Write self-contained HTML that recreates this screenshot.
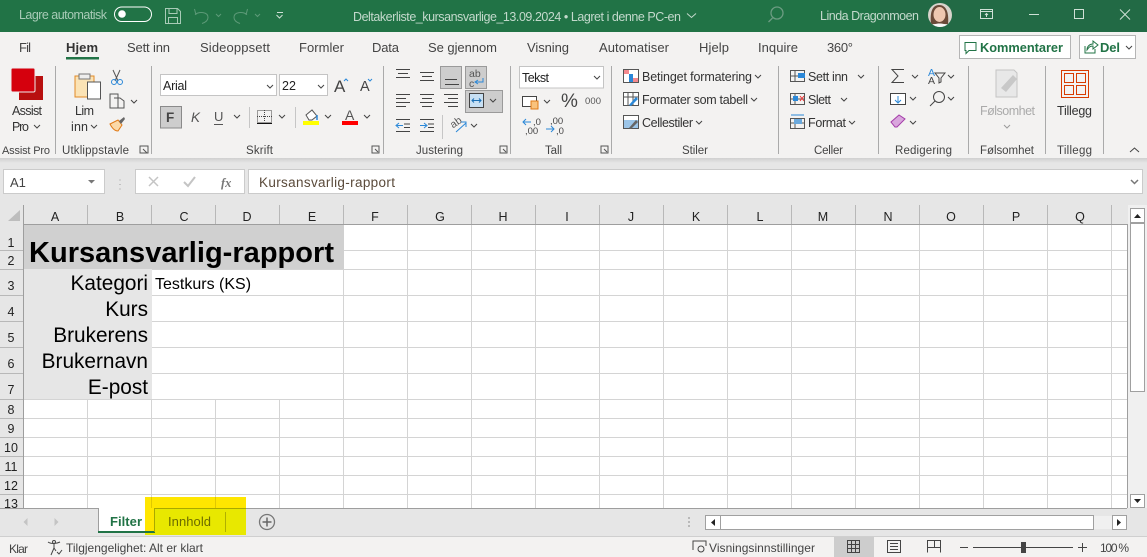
<!DOCTYPE html>
<html lang="no"><head><meta charset="utf-8"><title>Excel</title>
<style>
html,body{margin:0;padding:0;width:1147px;height:557px;overflow:hidden;background:#e6e6e6}
svg{display:block;font-family:"Liberation Sans",sans-serif}
text{fill:#333;font-size:12px}
.t{fill:#c3d9cc;font-size:12.5px}
.tab{font-size:13px;fill:#444}
.g{font-size:11.500px;fill:#444}
.r{font-size:12.500px;fill:#333}
.h{font-size:12.500px;fill:#222;text-anchor:middle}
.l{font-size:20.800px;fill:#000;text-anchor:end}
.s{font-size:12px;fill:#444}
.sep{stroke:#aaa;stroke-width:1}
.grid{stroke:#d4d4d4;stroke-width:1}
</style></head><body>
<svg width="1147" height="557" viewBox="0 0 1147 557" xmlns="http://www.w3.org/2000/svg">
<defs>
<path id="c" d="M0 0l3 3 3-3" fill="none" stroke="#444"/>
<linearGradient id="sh" x1="0" y1="0" x2="0" y2="1"><stop offset="0" stop-color="#cfcfcf"/><stop offset="1" stop-color="#e6e6e6"/></linearGradient>
<clipPath id="av"><circle cx="940" cy="15" r="12"/></clipPath>
</defs>
<rect width="1147" height="557" fill="#e6e6e6"/>
<!-- title bar -->
<rect width="1147" height="32" fill="#217346"/>
<rect x="880" width="267" height="32" fill="#236645" opacity=".7"/>
<text x="19" y="19" class="t" textLength="88" style="fill:#a8cbb7">Lagre automatisk</text>
<rect x="114.500" y="7" width="37" height="14.500" rx="7.200" fill="none" stroke="#fff"/>
<circle cx="122" cy="14" r="3.800" fill="#fff"/>
<g fill="none" stroke="#a8cbb7"><path d="M165.500 8.500h12l3 3v12h-15z"/><path d="M169 8.500v5h8v-5M168.500 23.500v-6h9v6"/>
<path d="M196 15l-1.500-6M195 14.500c4-3 13-3 13 3 0 3-3 5-6 6" stroke="#5d9a78"/>
<path d="M246 15l1.500-6M247 14.500c-4-3-13-3-13 3 0 3 3 5 6 6" stroke="#5d9a78"/>
<path d="M216 14l2.500 2.500 2.500-2.500M255 14l2.500 2.500 2.500-2.500" stroke="#5d9a78"/>
<path d="M277 12.500h6M276.500 15l3 3 3-3" stroke="#cfe0d6"/></g>
<text x="353" y="21" class="t" textLength="328">Deltakerliste_kursansvarlige_13.09.2024  •  Lagret i denne PC-en</text>
<path d="M687 13.500l4.500 4 4.500-4" fill="none" stroke="#c3d9cc"/>
<circle cx="777" cy="13" r="6" fill="none" stroke="#6c9c82" stroke-width="1.300"/><path d="M772.500 18l-4 4" stroke="#6c9c82" stroke-width="1.300"/>
<text x="820" y="20" class="t" textLength="99">Linda Dragonmoen</text>
<g clip-path="url(#av)"><rect x="928" y="3" width="24" height="24" fill="#d8d4cc"/>
<path d="M931 24c-1-9 0-19 8-19s10 9 9 19z" fill="#6b4a38"/>
<ellipse cx="939.500" cy="14.500" rx="6" ry="7.500" fill="#eec7b0"/>
<path d="M930 28c2-6 17-6 20 0z" fill="#f8f8f8"/></g>
<g fill="none" stroke="#cfe0d6"><rect x="980.500" y="9.500" width="12" height="9"/><path d="M980.500 11.500h12M986.500 17v-3M985 15l1.500-1.500 1.500 1.500"/><rect x="1074.500" y="9.500" width="9" height="9"/><path d="M1029 14.500h10M1120 9.500l10 10M1130 9.500l-10 10"/></g>
<!-- ribbon -->
<rect y="32" width="1147" height="126" fill="#f3f2f1"/>
<rect y="158" width="1147" height="5" fill="url(#sh)"/>
<text x="19" y="52" class="tab" textLength="12">Fil</text>
<text x="66" y="52" class="tab" style="font-weight:bold;fill:#333" textLength="32">Hjem</text>
<rect x="66" y="57" width="33" height="2.500" fill="#217346"/>
<text x="127" y="52" class="tab" textLength="43">Sett inn</text>
<text x="200" y="52" class="tab" textLength="70">Sideoppsett</text>
<text x="299" y="52" class="tab" textLength="45">Formler</text>
<text x="372" y="52" class="tab" textLength="27">Data</text>
<text x="428" y="52" class="tab" textLength="69">Se gjennom</text>
<text x="527" y="52" class="tab" textLength="42">Visning</text>
<text x="599" y="52" class="tab" textLength="70">Automatiser</text>
<text x="699" y="52" class="tab" textLength="30">Hjelp</text>
<text x="758" y="52" class="tab" textLength="40">Inquire</text>
<text x="827" y="52" class="tab" textLength="26">360°</text>
<rect x="959.500" y="35.500" width="111" height="23" fill="#fff" stroke="#b5b5b5"/>
<path d="M965 42.500h11v8h-7l-3 3v-3h-1z" fill="none" stroke="#217346"/>
<text x="980" y="52" style="font-weight:bold;font-size:12.800px;fill:#217346" textLength="83">Kommentarer</text>
<rect x="1079.500" y="35.500" width="56" height="23" fill="#fff" stroke="#b5b5b5"/>
<path d="M1085 46v7h10v-4M1087 50c0-4 3-6 6-6v-3l5 4-5 4v-3c-3 0-4 1-6 4z" fill="none" stroke="#217346"/>
<text x="1100" y="52" style="font-weight:bold;font-size:13px;fill:#217346" textLength="20">Del</text>
<use href="#c" x="1126" y="46"/>
<!-- separators -->
<g class="sep"><path d="M55.500 66v88M151.500 66v88M383.500 66v88M510.500 66v88M611.500 66v88M778.500 66v88M878.500 66v88M968.500 66v88M1045.500 66v88M1103.500 66v88"/></g>
<!-- group labels -->
<g>
<text x="2" y="154" class="g" style="font-size:11px" textLength="48">Assist Pro</text>
<text x="62" y="154" class="g" textLength="67">Utklippstavle</text>
<text x="246" y="154" class="g" textLength="27">Skrift</text>
<text x="416" y="154" class="g" textLength="47">Justering</text>
<text x="545" y="154" class="g" textLength="17">Tall</text>
<text x="682" y="154" class="g" textLength="26">Stiler</text>
<text x="814" y="154" class="g" textLength="29">Celler</text>
<text x="895" y="154" class="g" textLength="57">Redigering</text>
<text x="980" y="154" class="g" textLength="54">Følsomhet</text>
<text x="1057" y="154" class="g" textLength="35">Tillegg</text>
</g>
<g fill="none" stroke="#555"><path d="M140 146h8v7h-8zM143 149l4 4M372 146h7v7h-7zM375 149l3 3M500 146h7v7h-7zM503 149l3 3M601 146h7v7h-7zM604 149l3 3"/></g>
<path d="M1130 152l4.500-4 4.500 4" fill="none" stroke="#444"/>
<!-- Assist Pro -->
<rect x="19" y="76" width="24" height="24" fill="#b80f0f"/><rect x="11" y="68" width="24" height="24" rx="1.500" fill="#d5000d" stroke="#eee"/>
<text x="12" y="115" class="r" textLength="30">Assist</text><text x="12" y="131" class="r" textLength="17">Pro</text><use href="#c" x="34" y="125"/>
<!-- clipboard -->
<path d="M75 76h19v21h-19z" fill="#fbe3b5" stroke="#e08a26"/>
<rect x="79" y="74" width="11" height="5" fill="#eee" stroke="#777"/><rect x="87.500" y="82" width="13" height="17" fill="#fff" stroke="#555"/>
<text x="75" y="115" class="r" textLength="19">Lim</text><text x="71" y="131" class="r" textLength="17">inn</text><use href="#c" x="91" y="125"/>
<g fill="none" stroke="#555"><path d="M113 70l5 11M120 70l-5 11"/><circle cx="114" cy="82" r="2.500" stroke="#2b88d8"/><circle cx="120" cy="82" r="2.500" stroke="#2b88d8"/>
<path d="M110 94h8v14h-8zM114 98h6l4 3v7h-10"/></g><use href="#c" x="131" y="100"/>
<path d="M110 124l8-4 4 5-4 6c-3 0-6-3-8-7z" fill="#fbd9a8" stroke="#e07a16"/><path d="M119 121l5-4 1 2-4 5z" fill="#666"/>
<!-- font -->
<rect x="160.500" y="74.500" width="116" height="21" fill="#fff" stroke="#c4c4c4"/><text x="163" y="90" class="r" style="fill:#222" textLength="24">Arial</text><use href="#c" x="267" y="85"/>
<rect x="279.500" y="74.500" width="48" height="21" fill="#fff" stroke="#c4c4c4"/><text x="282" y="90" class="r" style="fill:#222">22</text><use href="#c" x="318" y="85"/>
<text x="334" y="92" style="font-size:17px;fill:#444">A</text><path d="M344 81l2-2 2 2" fill="none" stroke="#2b88d8"/>
<text x="360" y="91" style="font-size:14.500px;fill:#444">A</text><path d="M368 79l2 2 2-2" fill="none" stroke="#2b88d8"/>
<rect x="160.500" y="106.500" width="21" height="21.500" fill="#cdcdcd" stroke="#8a8a8a"/><text x="166" y="122" style="font-weight:bold;font-size:13.500px;fill:#444">F</text>
<text x="191" y="122" style="font-style:italic;font-size:13.500px;fill:#555">K</text>
<text x="214" y="121" style="font-size:13px;fill:#555">U</text><path d="M214 124.500h9" stroke="#555"/>
<use href="#c" x="234" y="115"/>
<path d="M249.500 107v21M295.500 107v21" stroke="#c6c6c6"/>
<g fill="none" stroke="#444" stroke-dasharray="1 1"><rect x="257.500" y="110.500" width="14" height="12"/><path d="M264.500 110v12M257 116.500h15"/></g><path d="M257 123.500h15" stroke="#111"/>
<use href="#c" x="279" y="115"/>
<path d="M306 115l6-5 5 6-5 4h-3z" fill="#fff" stroke="#555"/><path d="M317 120v-5" stroke="#2b88d8" stroke-width="1.500"/>
<rect x="303" y="121" width="16" height="4" fill="#ffff00"/><use href="#c" x="325" y="115"/>
<text x="345" y="120" style="font-size:14px;fill:#555">A</text><rect x="342" y="121" width="16" height="4" fill="#f00"/><use href="#c" x="364" y="115"/>
<!-- alignment -->
<rect x="440.500" y="66.500" width="21" height="22" fill="#cdcdcd" stroke="#9a9a9a"/>
<rect x="465.500" y="66.500" width="21" height="22" fill="#cdcdcd" stroke="#9a9a9a"/>
<rect x="465.500" y="90.500" width="37" height="22" fill="#cdcdcd" stroke="#9a9a9a"/>
<g fill="none" stroke="#444">
<path d="M396 69.500h14M398 73.500h10M396 77.500h14M420 72.500h14M422 76.500h10M420 80.500h14M445 79.500h12M445 84.500h14"/>
<path d="M396 94.500h14M396 98.500h10M396 102.500h14M396 106.500h10M420 94.500h14M422 98.500h10M420 102.500h14M422 106.500h10M444 94.500h14M448 98.500h10M444 102.500h14M448 106.500h10"/>
<path d="M396 119.500h14M404 124h6M404 127.500h6M396 131.500h14M420 119.500h14M428 124h6M428 127.500h6M420 131.500h14"/>
<path d="M442.500 115v24" stroke="#c6c6c6"/>
</g>
<path d="M397 125.500h6M399 123l-3 2.500 3 2.500M420 125.500h6M424 123l3 2.500-3 2.500" fill="none" stroke="#2b88d8"/>
<text x="469" y="77" style="font-size:10.500px;fill:#555">ab</text><text x="469" y="87" style="font-size:10.500px;fill:#555">c</text><path d="M483 78v4h-8M478 80l-3 2 3 2" fill="none" stroke="#2b88d8"/>
<rect x="469.500" y="93.500" width="14" height="14" fill="#c7e0f4" stroke="#444"/><path d="M472 100.500h9M474 98.500l-2 2 2 2M479 98.500l2 2-2 2" fill="none" stroke="#1a6fb5"/>
<use href="#c" x="490" y="99"/>
<text x="451" y="126" style="font-size:10.500px;fill:#555" transform="rotate(-35 456 124)">ab</text><path d="M456 132l10-9M461 122h5v5" fill="none" stroke="#2b88d8"/><use href="#c" x="471" y="124"/>
<!-- number -->
<rect x="519.500" y="66.500" width="84" height="21.500" fill="#fff" stroke="#c4c4c4"/><text x="522" y="82" class="r" style="fill:#222" textLength="27">Tekst</text><use href="#c" x="594" y="76"/>
<rect x="522.500" y="96.500" width="14" height="10" fill="#fff" stroke="#444"/><rect x="531" y="101" width="7" height="8" fill="#f9c27d" stroke="#e07a16"/><use href="#c" x="544" y="100"/>
<text x="561" y="107" style="font-size:19px;fill:#444" textLength="16">%</text><text x="585" y="104" style="font-size:9.500px;fill:#555" textLength="16">000</text>
<text x="533" y="125" style="font-size:9.500px;fill:#444">,0</text><text x="525" y="134" style="font-size:9.500px;fill:#444">,00</text><path d="M523 122h8M526 119l-3 3 3 3" fill="none" stroke="#2b88d8"/>
<text x="550" y="124" style="font-size:9.500px;fill:#444">,00</text><text x="556" y="134" style="font-size:9.500px;fill:#444">,0</text><path d="M546 129h8M551 126l3 3-3 3" fill="none" stroke="#2b88d8"/>
<!-- styles -->
<g><rect x="623.500" y="69.500" width="15" height="13" fill="#fff" stroke="#555"/><rect x="624" y="70" width="5" height="4" fill="#f4898e"/><rect x="629" y="74" width="4" height="8" fill="#2b88d8"/><rect x="633" y="78" width="5" height="4" fill="#f4898e"/>
<text x="642" y="81" class="r" textLength="110">Betinget formatering</text><use href="#c" x="755" y="75"/>
<rect x="623.500" y="92.500" width="15" height="13" fill="#fff" stroke="#555"/><path d="M623 97h16M628 92v14M633 92v14" stroke="#555"/><path d="M629 105l7-8 2 2-7 7z" fill="#2b88d8"/>
<text x="642" y="104" class="r" textLength="106">Formater som tabell</text><use href="#c" x="751" y="98"/>
<rect x="623.500" y="115.500" width="15" height="13" fill="#fff" stroke="#555"/><rect x="624" y="120" width="14" height="8" fill="#9cc5e8"/><path d="M629 128l7-8 2 2-7 7z" fill="#666"/>
<text x="642" y="127" class="r" textLength="51">Cellestiler</text><use href="#c" x="696" y="121"/></g>
<!-- cells -->
<g fill="none" stroke="#555"><rect x="790.500" y="70.500" width="14" height="11"/><path d="M795 70v11M790 76h15"/><rect x="798" y="73" width="7" height="5" fill="#2b88d8" stroke="none"/>
<rect x="790.500" y="93.500" width="14" height="11"/><path d="M795 93v11M790 99h15"/><rect x="793" y="96" width="5" height="5" fill="#2b88d8" stroke="none"/><path d="M800 96l4 5M804 96l-4 5" stroke="#e33"/>
<rect x="790.500" y="118.500" width="14" height="10"/><path d="M795 118v10M790 123h15"/><rect x="794" y="119" width="8" height="5" fill="#6aa9dd" stroke="none"/><path d="M791 115h13" stroke="#2b88d8"/></g>
<text x="808" y="81" class="r" textLength="40">Sett inn</text><use href="#c" x="858" y="75"/>
<text x="808" y="104" class="r" textLength="23">Slett</text><use href="#c" x="841" y="98"/>
<text x="808" y="127" class="r" textLength="38">Format</text><use href="#c" x="849" y="121"/>
<!-- editing -->
<path d="M904 69.500h-12l6 6.500-6 6.500h12" fill="none" stroke="#444"/><use href="#c" x="912" y="75"/>
<rect x="890.500" y="93.500" width="15" height="11" fill="#fff" stroke="#444"/><path d="M898 96v7M895 100l3 3 3-3" fill="none" stroke="#2b88d8"/><use href="#c" x="910" y="97"/>
<path d="M891 122l8-7 6 4-8 8h-2z" fill="#d9a6dd" stroke="#a33ca8"/><use href="#c" x="910" y="121"/>
<text x="928" y="76" style="font-size:10.500px;fill:#2b88d8">A</text><text x="928" y="84" style="font-size:10.500px;fill:#444">A</text><path d="M935 73h10l-4 5v4l-2 1v-5z" fill="none" stroke="#444"/><use href="#c" x="948" y="75"/>
<circle cx="939" cy="97" r="5.500" fill="none" stroke="#444"/><path d="M935 101l-5 5" stroke="#444"/><use href="#c" x="948" y="97"/>
<!-- sensitivity -->
<path d="M996 70h18l3 3v24h-21z" fill="#e8e8e8" stroke="#c4c4c4"/><path d="M1001 88l12-13 4 4-11 13z" fill="#c8c8c8"/>
<text x="980" y="115" class="r" style="fill:#aaa" textLength="55">Følsomhet</text><use href="#c" x="1004" y="125" style="opacity:.5"/>
<!-- addins -->
<g fill="none" stroke="#d83b01"><rect x="1061.500" y="70.500" width="27" height="27"/><rect x="1064.500" y="73.500" width="9" height="9"/><rect x="1076.500" y="73.500" width="9" height="9"/><rect x="1064.500" y="85.500" width="9" height="9"/><rect x="1076.500" y="85.500" width="9" height="9"/></g>
<text x="1057" y="115" class="r" textLength="35">Tillegg</text>
<!-- formula bar -->
<rect x="3.500" y="169.500" width="101" height="24" fill="#fff" stroke="#cbcbcb"/><text x="10" y="187" class="r" style="font-size:13px;fill:#444">A1</text><path d="M88 180h7l-3.500 3.500z" fill="#777"/>
<path d="M120 179.500v1M120 184v1M120 188.500v1" stroke="#999"/>
<rect x="135.500" y="169.500" width="109" height="24" fill="#fff" stroke="#cbcbcb"/>
<path d="M149 177l9 9M158 177l-9 9" stroke="#c4c4c4" stroke-width="1.500"/><path d="M184 182l4 4 7-9" fill="none" stroke="#c4c4c4" stroke-width="2"/>
<text x="221" y="187" style="font-family:'Liberation Serif',serif;font-style:italic;font-weight:bold;font-size:12.500px;fill:#777">fx</text>
<rect x="248.500" y="169.500" width="894" height="24" fill="#fff" stroke="#cbcbcb"/>
<text x="259" y="187" style="font-size:13.500px;fill:#5a4a3a" textLength="136">Kursansvarlig-rapport</text>
<path d="M1131 180l3.500 3.500 3.500-3.500" fill="none" stroke="#777" stroke-width="1.500"/>
<!-- grid -->
<rect x="24" y="224" width="1103" height="284" fill="#fff"/>
<g class="grid"><path d="M87.500 205v303M151.500 205v303M215.500 205v303M279.500 205v303M343.500 205v303M407.500 205v303M471.500 205v303M535.500 205v303M599.500 205v303M663.500 205v303M727.500 205v303M791.500 205v303M855.500 205v303M919.500 205v303M983.500 205v303M1047.500 205v303M1111.500 205v303"/>
<path d="M0 250.500h1127M0 269.500h1127M0 295.500h1127M0 321.500h1127M0 347.500h1127M0 373.500h1127M0 399.500h1127M0 418.500h1127M0 437.500h1127M0 456.500h1127M0 475.500h1127M0 494.500h1127"/></g>
<!-- header zones -->
<rect x="0" y="205" width="1127" height="19" fill="#e6e6e6"/>
<rect x="0" y="224" width="23" height="284" fill="#e6e6e6"/>
<path d="M87.500 205v19M151.500 205v19M215.500 205v19M279.500 205v19M343.500 205v19M407.500 205v19M471.500 205v19M535.500 205v19M599.500 205v19M663.500 205v19M727.500 205v19M791.500 205v19M855.500 205v19M919.500 205v19M983.500 205v19M1047.500 205v19M1111.500 205v19" stroke="#b8b8b8"/>
<path d="M0 250.500h23M0 269.500h23M0 295.500h23M0 321.500h23M0 347.500h23M0 373.500h23M0 399.500h23M0 418.500h23M0 437.500h23M0 456.500h23M0 475.500h23M0 494.500h23" stroke="#b8b8b8"/>
<path d="M23.500 205v303M24 224.500h1103M1127.500 224v284" stroke="#9e9e9e"/>
<path d="M20 210v11H8z" fill="#bdbdbd"/>
<text x="55" y="221" class="h">A</text><text x="120" y="221" class="h">B</text><text x="184" y="221" class="h">C</text><text x="247" y="221" class="h">D</text><text x="312" y="221" class="h">E</text><text x="375" y="221" class="h">F</text><text x="440" y="221" class="h">G</text><text x="503" y="221" class="h">H</text><text x="567" y="221" class="h">I</text><text x="631" y="221" class="h">J</text><text x="696" y="221" class="h">K</text><text x="760" y="221" class="h">L</text><text x="823" y="221" class="h">M</text><text x="888" y="221" class="h">N</text><text x="951" y="221" class="h">O</text><text x="1016" y="221" class="h">P</text><text x="1080" y="221" class="h">Q</text>
<text x="11" y="247" class="h">1</text><text x="11" y="265" class="h">2</text><text x="11" y="290" class="h">3</text><text x="11" y="316" class="h">4</text><text x="11" y="342" class="h">5</text><text x="11" y="368" class="h">6</text><text x="11" y="394" class="h">7</text><text x="11" y="414" class="h">8</text><text x="11" y="433" class="h">9</text><text x="11" y="452" class="h">10</text><text x="11" y="471" class="h">11</text><text x="11" y="490" class="h">12</text><text x="11" y="508" class="h">13</text>
<!-- filled cells -->
<rect x="24" y="225" width="320" height="44" fill="#d0d0d0"/>
<rect x="24" y="269" width="128" height="130" fill="#e6e6e6"/>
<rect x="152" y="270" width="191" height="25" fill="#fff"/><rect x="152" y="296" width="191" height="25" fill="#fff"/><rect x="152" y="322" width="191" height="25" fill="#fff"/><rect x="152" y="348" width="191" height="25" fill="#fff"/><rect x="152" y="374" width="191" height="25" fill="#fff"/>
<text x="29" y="262" style="font-weight:bold;font-size:29px;fill:#000" textLength="305">Kursansvarlig-rapport</text>
<text x="148" y="290" class="l">Kategori</text><text x="148" y="316" class="l">Kurs</text><text x="148" y="342" class="l">Brukerens</text><text x="148" y="368" class="l">Brukernavn</text><text x="148" y="394" class="l">E-post</text>
<text x="155" y="289" style="font-size:16px;fill:#000">Testkurs (KS)</text>
<!-- v scroll -->
<rect x="1128" y="205" width="19" height="303" fill="#f0f0f0"/>
<rect x="1130.500" y="208.500" width="14" height="14" fill="#fff" stroke="#a0a0a0"/><path d="M1134 218h7l-3.500-4z" fill="#222"/>
<rect x="1130.500" y="223.500" width="14" height="168" fill="#fff" stroke="#a0a0a0"/>
<rect x="1130.500" y="494.500" width="14" height="13" fill="#fff" stroke="#a0a0a0"/><path d="M1134 499h7l-3.500 4z" fill="#222"/>
<path d="M0 508.500h1127" stroke="#9e9e9e"/>
<!-- tabs -->
<path d="M27.500 518v8l-4-4zM54.500 518v8l4-4z" fill="#c4c4c4"/>
<path d="M99 508h56v25H99z" fill="#fff"/><path d="M98.500 531v-23" stroke="#9e9e9e"/><rect x="98" y="531" width="57" height="2" fill="#217346"/>
<text x="110" y="526" style="font-weight:bold;font-size:13px;fill:#217346" textLength="32">Filter</text>
<!-- highlight -->
<rect x="145" y="497" width="101" height="11" fill="#ffe600"/>
<rect x="145" y="508" width="101" height="27" fill="#e8e800"/>
<rect x="145" y="508" width="10" height="23" fill="#ffe600"/><rect x="145" y="531" width="10" height="2" fill="#217346"/>
<path d="M151.500 497v11M215.500 497v11" stroke="#e0c800"/>
<path d="M154.500 532v-23.500H246" fill="none" stroke="#a9a900"/>
<text x="168" y="526" style="font-size:13px;fill:#6b6b00" textLength="43">Innhold</text>
<path d="M225.500 512v20" stroke="#b0b000"/>
<circle cx="267" cy="522" r="7.500" fill="none" stroke="#777" stroke-width="1.300"/><path d="M262.500 522h9M267 517.500v9" stroke="#666" stroke-width="1.500"/>
<path d="M689 517v2M689 521v2M689 525v2" stroke="#aaa" stroke-width="1.500"/>
<rect x="705.500" y="515.500" width="15" height="14" fill="#fff" stroke="#a0a0a0"/><path d="M715 519v7l-4-3.500z" fill="#222"/>
<rect x="720.500" y="515.500" width="373" height="14" fill="#fff" stroke="#a0a0a0"/>
<rect x="1094" y="516" width="18" height="13" fill="#f0f0f0"/>
<rect x="1112.500" y="515.500" width="14" height="14" fill="#fff" stroke="#a0a0a0"/><path d="M1117 519v7l4-3.500z" fill="#222"/>
<!-- status bar -->
<rect y="536" width="1147" height="21" fill="#f3f2f1"/><path d="M0 536.500h1147" stroke="#cfcfcf"/>
<text x="9" y="553" class="s" textLength="19">Klar</text>
<path d="M48 542c3 2 8 2 12 0M54 544v4l-3 7M54 548l2 3" fill="none" stroke="#444"/><circle cx="54" cy="542" r="1.500" fill="none" stroke="#444"/><path d="M57 552l2 2 3-4" fill="none" stroke="#444"/>
<text x="66" y="552" class="s" textLength="137">Tilgjengelighet: Alt er klart</text>
<path d="M693 550v-9h13v5" fill="none" stroke="#444"/><circle cx="701" cy="549" r="3" fill="none" stroke="#444"/>
<text x="709" y="552" class="s" textLength="106">Visningsinnstillinger</text>
<rect x="834" y="537" width="40" height="20" fill="#cdcdcd"/>
<g fill="none" stroke="#444"><path d="M847.500 540.500h12v12h-12zM847 544.500h13M847 548.500h13M851.500 540v13M855.500 540v13"/>
<rect x="887.500" y="540.500" width="13" height="12"/><path d="M890 543.500h8M890 546.500h8M890 549.500h8"/>
<path d="M927.500 552.500v-12h13v12M927 547.500h13M934.500 540v7"/>
<path d="M960 547.500h8M973 547.500h100M1078 547.500h9M1082.500 543v9"/></g>
<rect x="1021" y="542" width="5" height="11" fill="#444"/>
<text x="1100" y="552" class="s" textLength="29">100 %</text>
</svg>
</body></html>
